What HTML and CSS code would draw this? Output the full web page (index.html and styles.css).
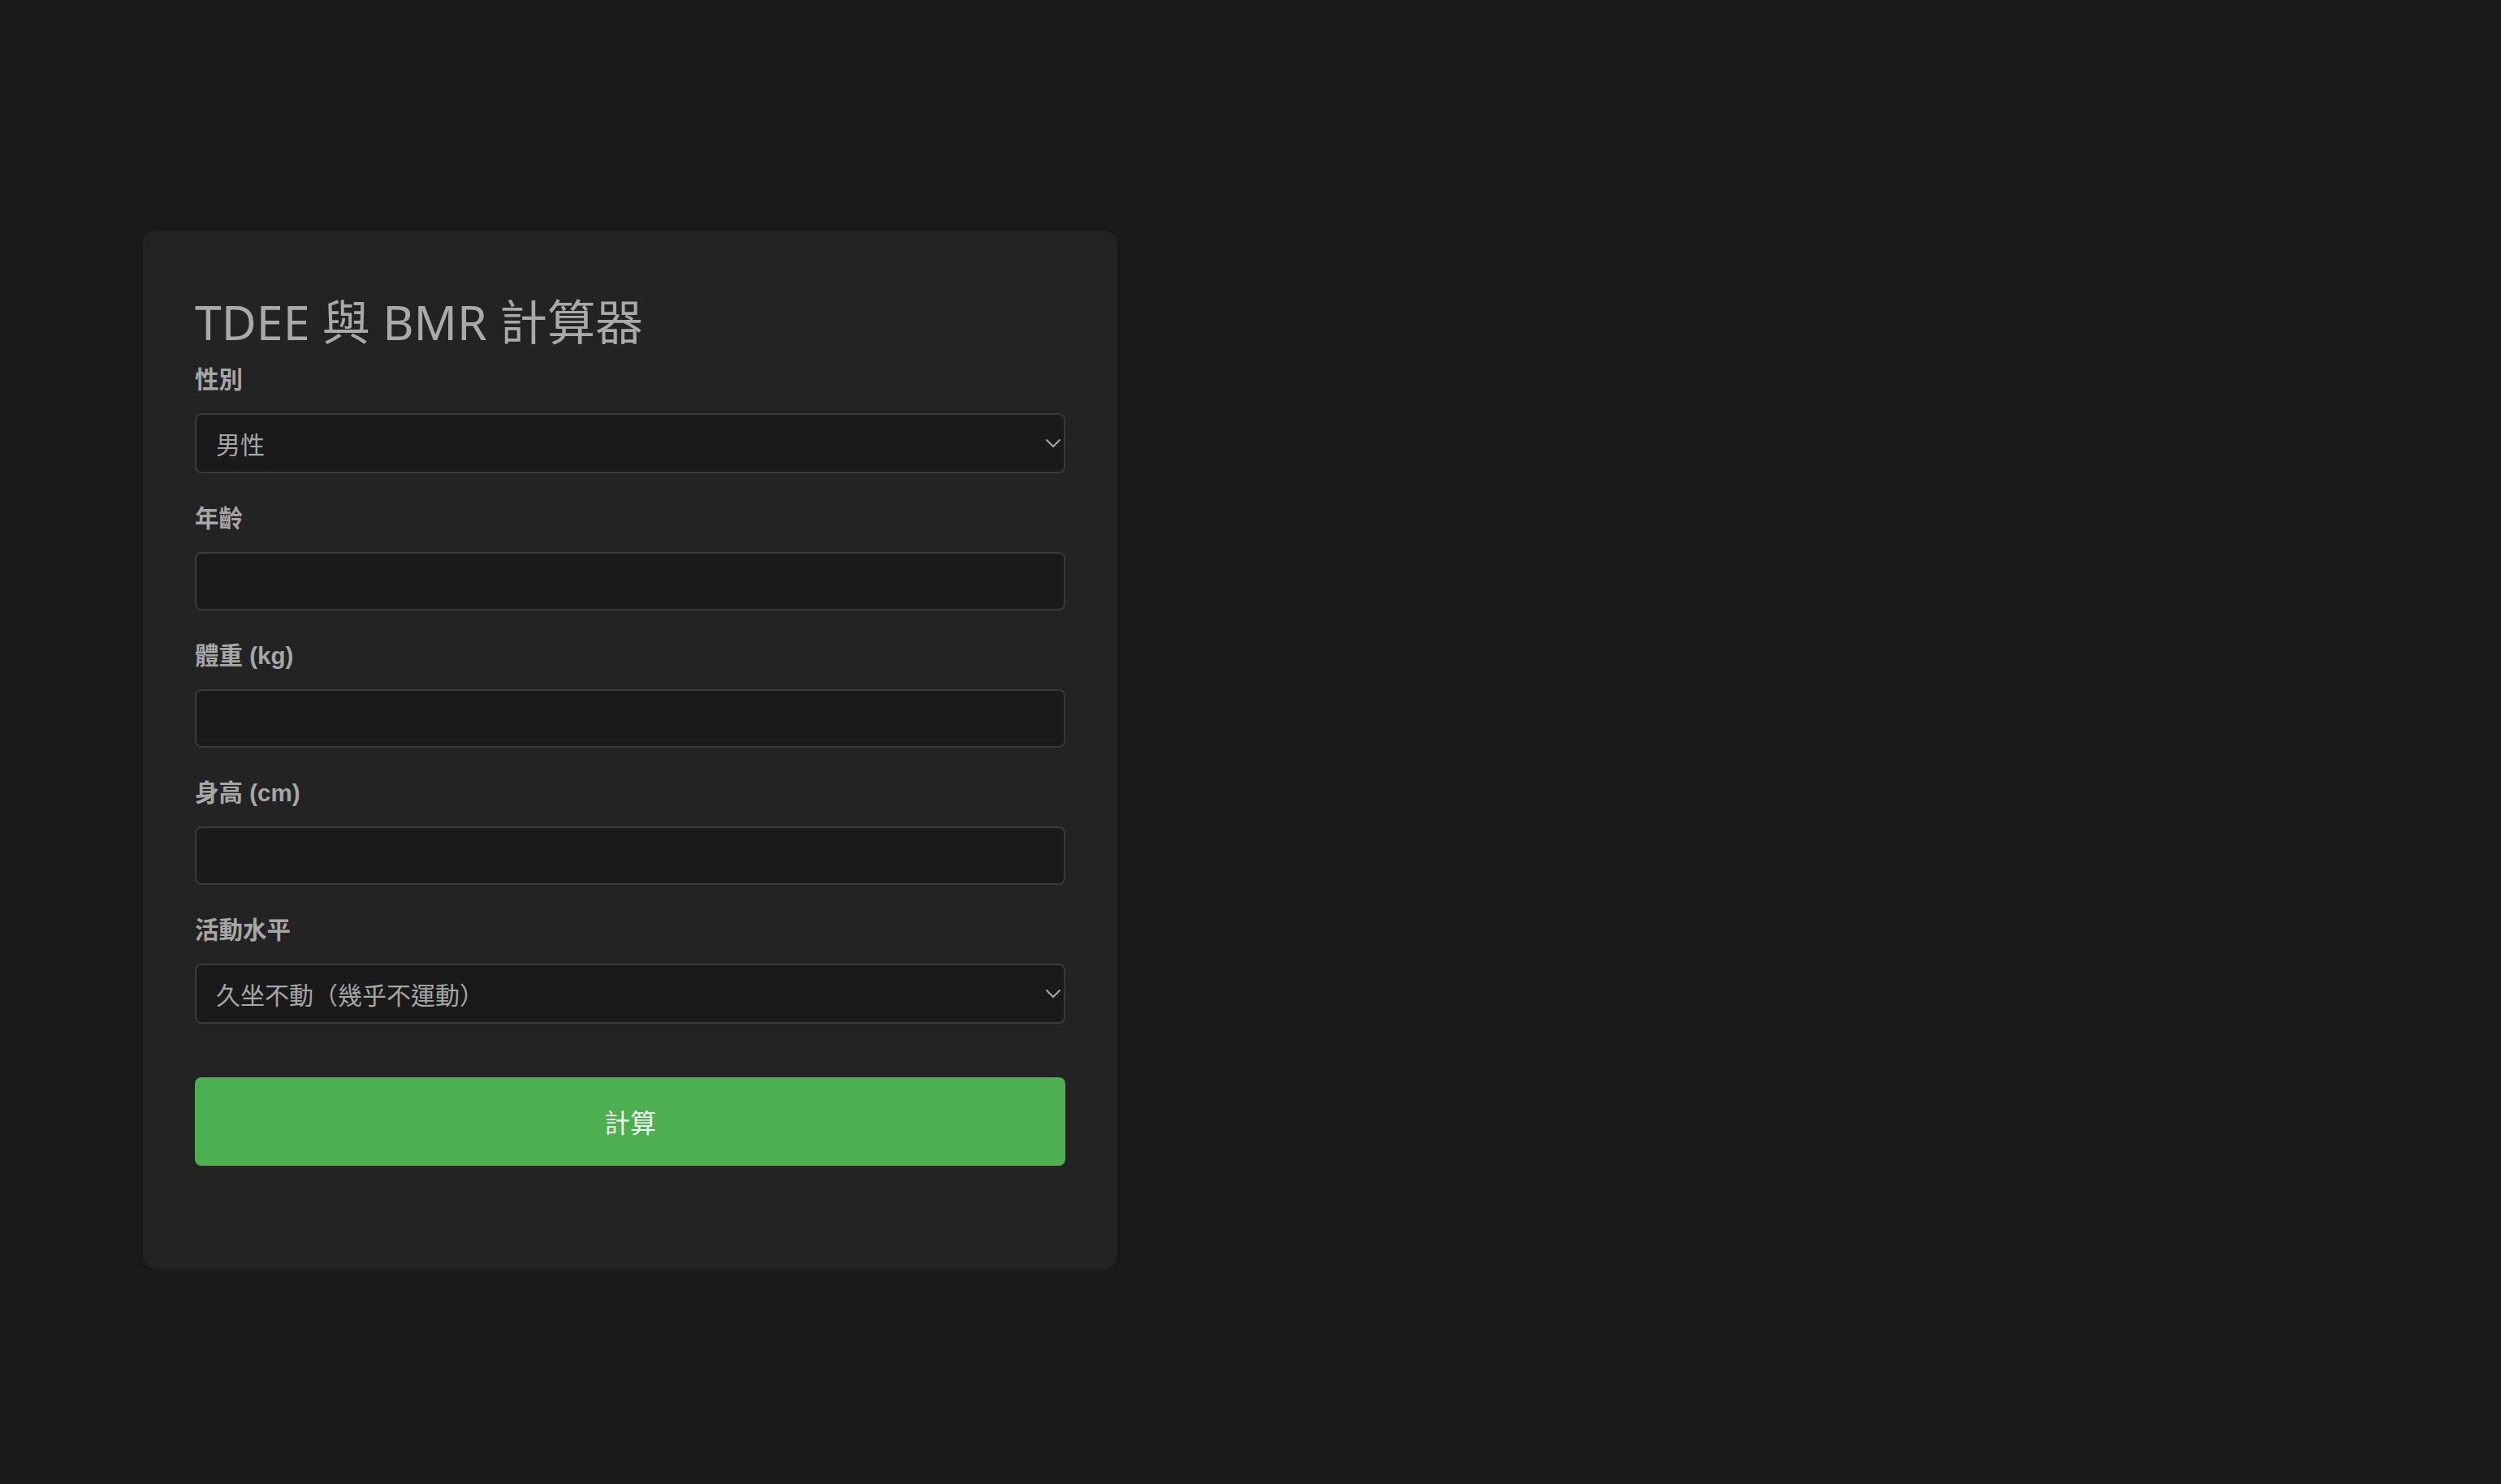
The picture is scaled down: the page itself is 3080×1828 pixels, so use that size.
FILE: index.html
```html
<!DOCTYPE html>
<html lang="zh-Hant">
<head>
    <meta charset="UTF-8">
    <meta name="viewport" content="width=device-width, initial-scale=1.0">
    <title>TDEE 與 BMR 計算器</title>
    <link rel="stylesheet" href="styles.css">
</head>
<body>
    <div class="page">
        <div class="card">
            <h1 class="title">TDEE 與 BMR 計算器</h1>
            <form class="calc-form" onsubmit="return false;">
                <div class="field">
                    <label for="gender">性別</label>
                    <div class="select-wrap">
                        <select id="gender">
                            <option value="male">男性</option>
                            <option value="female">女性</option>
                        </select>
                        <svg class="chevron" width="20" height="12" viewBox="0 0 20 12">
                            <polyline points="1.5,1.5 10,10 18.5,1.5" fill="none" stroke="#a9a9a9" stroke-width="2"/>
                        </svg>
                    </div>
                </div>
                <div class="field">
                    <label for="age">年齡</label>
                    <input type="number" id="age">
                </div>
                <div class="field">
                    <label for="weight">體重 (kg)</label>
                    <input type="number" id="weight">
                </div>
                <div class="field">
                    <label for="height">身高 (cm)</label>
                    <input type="number" id="height">
                </div>
                <div class="field">
                    <label for="activity">活動水平</label>
                    <div class="select-wrap">
                        <select id="activity">
                            <option value="1.2">久坐不動（幾乎不運動）</option>
                            <option value="1.375">輕度活動（每週運動 1-3 天）</option>
                            <option value="1.55">中度活動（每週運動 3-5 天）</option>
                            <option value="1.725">高度活動（每週運動 6-7 天）</option>
                            <option value="1.9">非常高度活動（體力勞動）</option>
                        </select>
                        <svg class="chevron" width="20" height="12" viewBox="0 0 20 12">
                            <polyline points="1.5,1.5 10,10 18.5,1.5" fill="none" stroke="#a9a9a9" stroke-width="2"/>
                        </svg>
                    </div>
                </div>
                <button type="submit" class="calc-btn">計算</button>
            </form>
        </div>
    </div>
</body>
</html>
```

FILE: styles.css
```css
body {
    margin: 0;
    background-color: #1b1b1b;
    font-family: "Liberation Sans", "Noto Sans CJK TC", sans-serif;
    color: #a8a8a8;
}
.page {
    padding: 284px 0 0 176px;
}
.card {
    box-sizing: border-box;
    width: 1200px;
    padding: 64px;
    background-color: #232323;
    border-radius: 16px;
    box-shadow: 0 4px 12px rgba(0, 0, 0, 0.35);
}
.title {
    margin: 13px 0 17px;
    font-family: "Noto Sans", "Noto Sans CJK TC", sans-serif;
    font-size: 59px;
    line-height: 70px;
    font-weight: 400;
    color: #a9a9a9;
}
.calc-form {
    margin-bottom: 63px;
}
.field {
    margin-bottom: 36px;
}
.field label {
    display: block;
    margin-bottom: 21px;
    font-size: 29.5px;
    line-height: 40px;
    font-weight: bold;
    color: #a6a6a6;
}
.field input,
.field select {
    box-sizing: border-box;
    display: block;
    width: 100%;
    margin: 0;
    padding: 0 24px;
    border: 2px solid #3a3a3a;
    border-radius: 8px;
    background-color: #1a1a1a;
    color: #a6a6a6;
    font-family: "Noto Sans CJK TC", sans-serif;
    font-size: 30px;
    outline: none;
}
.field input {
    height: 72px;
}
.field select {
    height: 74px;
    appearance: none;
    -webkit-appearance: none;
}
.select-wrap {
    position: relative;
}
.chevron {
    position: absolute;
    right: 5px;
    top: 31px;
    pointer-events: none;
}
.calc-btn {
    display: block;
    width: 100%;
    margin-top: 66px;
    padding: 32px 0;
    border: none;
    border-radius: 8px;
    background-color: #4caf50;
    color: #f4f4f4;
    font-family: "Noto Sans CJK TC", sans-serif;
    font-size: 32px;
    line-height: 45px;
    cursor: pointer;
}
```
